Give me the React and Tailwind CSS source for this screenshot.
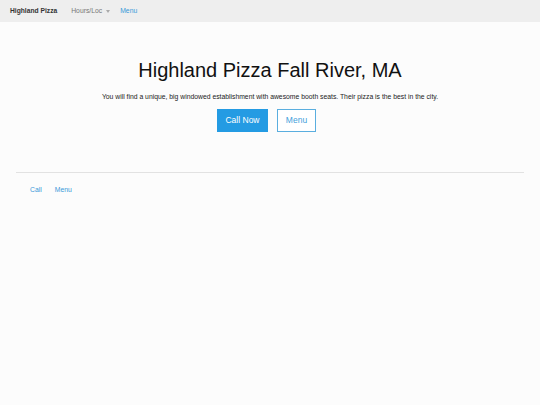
export default function App() {
  return (
    <div className="min-h-[405px] bg-[#fcfcfc] font-['Liberation_Sans',Arial,sans-serif]">
      <nav className="h-[22px] bg-[#eeeeee] flex items-center px-[10px] text-[6.8px]">
        <span className="font-bold text-[#333] text-[6.7px]">Highland Pizza</span>
        <span className="ml-[14px] text-[#777] flex items-center">
          Hours/Loc
          <span className="ml-[4px] inline-block w-0 h-0 border-l-[2.5px] border-r-[2.5px] border-t-[3px] border-l-transparent border-r-transparent border-t-[#aaa]"></span>
        </span>
        <span className="ml-[10px] text-[#3a9ad9]">Menu</span>
      </nav>
      <div className="flex flex-col items-center pt-[36px]">
        <h1 className="text-[20px] leading-[24px] text-[#111]">Highland Pizza Fall River, MA</h1>
        <p className="mt-[10px] text-[6.8px] text-[#222]">You will find a unique, big windowed establishment with awesome booth seats. Their pizza is the best in the city.</p>
        <div className="mt-[7px] mr-[7px] flex gap-[9px]">
          <button className="w-[51px] h-[23px] bg-[#249be3] text-white text-[8.5px] border border-[#249be3]">Call Now</button>
          <button className="w-[39px] h-[23px] bg-white text-[#3f9fdc] text-[8.5px] border border-[#5aaedf]">Menu</button>
        </div>
      </div>
      <div className="mx-[16px] mt-[40px] border-t border-[#e2e2e2]"></div>
      <div className="flex gap-[13px] pl-[30px] pt-[12px] text-[6.8px] text-[#3a9ad9]">
        <span>Call</span>
        <span>Menu</span>
      </div>
    </div>
  );
}
